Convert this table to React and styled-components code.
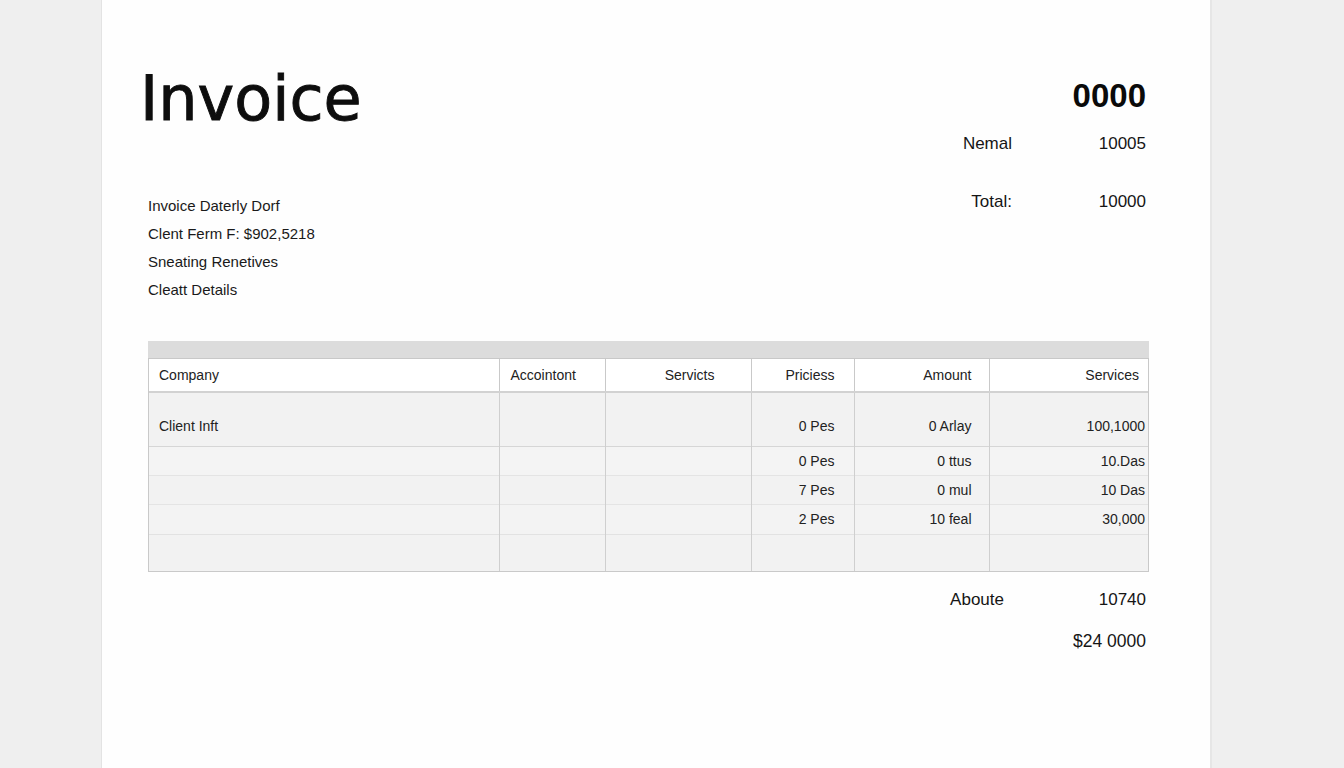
import React from 'react';
import styled, { createGlobalStyle } from 'styled-components';

const GlobalStyle = createGlobalStyle`
  html, body {
    margin: 0;
    padding: 0;
    background: #efefef;
  }
  body {
    font-family: "Liberation Sans", Arial, sans-serif;
    color: #141414;
  }
`;

const Backdrop = styled.div`
  min-height: 100vh;
  padding-left: 101px;
  box-sizing: border-box;
`;

const Sheet = styled.div`
  width: 1111px;
  min-height: 768px;
  box-sizing: border-box;
  background: #fefefe;
  border-left: 1px solid #e3e3e3;
  border-right: 2px solid #e6e6e6;
  padding: 63px 62px 40px 46px;
`;

const Header = styled.header`
  display: flex;
  justify-content: space-between;
  align-items: flex-start;
`;

const LeftCol = styled.div`
  display: flex;
  flex-direction: column;
`;

const Title = styled.h1`
  margin: 4px 0 0 -8px;
  font-family: "DejaVu Sans", Inter, sans-serif;
  font-weight: 400;
  font-size: 62px;
  line-height: 63px;
  letter-spacing: 0;
  color: #0d0d0d;
  -webkit-text-stroke: 0.9px #0d0d0d;
`;

const Details = styled.div`
  margin-top: 62px;
  display: flex;
  flex-direction: column;
`;

const DetailLine = styled.div`
  font-size: 15px;
  line-height: 28px;
  color: #1a1a1a;
`;

const RightCol = styled.div`
  display: flex;
  flex-direction: column;
  align-items: flex-end;
  padding-right: 2px;
`;

const InvoiceNumber = styled.div`
  margin-top: 16px;
  font-size: 33px;
  line-height: 34px;
  font-weight: 700;
  color: #0a0a0a;
`;

const Summary = styled.div`
  display: grid;
  grid-template-columns: auto 134px;
  row-gap: ${p => p.gap || 0}px;
  margin-top: ${p => p.top || 0}px;
`;

const SumLabel = styled.div`
  text-align: right;
  margin-right: ${p => p.shift || 0}px;
  font-size: ${p => p.size || 17}px;
  line-height: 24px;
  color: #151515;
`;

const SumValue = styled.div`
  text-align: right;
  font-size: ${p => p.size || 17}px;
  line-height: 24px;
  color: #151515;
`;

const TableWrap = styled.div`
  margin-top: 37px;
  margin-right: -3px;
  width: 1001px;
  border: 1px solid #c9c9c9;
  border-top: none;
  box-sizing: border-box;
`;

const TopBar = styled.div`
  height: 17px;
  background: #dcdcdc;
  border-bottom: 1px solid #c8c8c8;
  margin: 0 -1px;
`;

const Table = styled.table`
  width: 100%;
  border-collapse: collapse;
  table-layout: fixed;
  font-size: 14px;
  color: #222;
`;

const HeadCell = styled.th`
  height: 32px;
  padding: 0 ${p => p.pad || 10}px;
  font-weight: 400;
  text-align: ${p => p.align || 'right'};
  background: #ffffff;
  border-left: 1px solid #c9c9c9;
  border-bottom: 2px solid #d2d2d2;
  &:first-child { border-left: none; }
`;

const Row = styled.tr`
  background: ${p => p.shade || '#f3f3f3'};
  border-top: 1px solid ${p => p.line || '#e3e3e3'};
  &:first-child { border-top: none; }
`;

const Cell = styled.td`
  box-sizing: border-box;
  height: ${p => p.h}px;
  padding: ${p => p.offset || 0}px ${p => p.pad || 10}px 0;
  text-align: ${p => p.align || 'right'};
  border-left: 1px solid #cfcfcf;
  vertical-align: middle;
  &:first-child { border-left: none; }
`;

const Footer = styled.div`
  display: flex;
  justify-content: flex-end;
  padding-right: 2px;
`;

const columns = [
  { label: 'Company', width: 350, align: 'left', pad: 10 },
  { label: 'Accointont', width: 106, align: 'left', pad: 11 },
  { label: 'Servicts', width: 146, align: 'right', pad: 36 },
  { label: 'Priciess', width: 103, align: 'right', pad: 19 },
  { label: 'Amount', width: 135, align: 'right', pad: 17 },
  { label: 'Services', width: 159, align: 'right', pad: 9 },
];

const rows = [
  { h: 54, offset: 13, shade: '#f2f2f2', line: '#d4d4d4', cells: ['Client Inft', '', '', '0 Pes', '0 Arlay', '100,1000'] },
  { h: 29, shade: '#f4f4f4', line: '#d6d6d6', cells: ['', '', '', '0 Pes', '0 ttus', '10.Das'] },
  { h: 29, shade: '#f2f2f2', line: '#e4e4e4', cells: ['', '', '', '7 Pes', '0 mul', '10 Das'] },
  { h: 30, shade: '#f3f3f3', line: '#e4e4e4', cells: ['', '', '', '2 Pes', '10 feal', '30,000'] },
  { h: 37, shade: '#f2f2f2', line: '#e2e2e2', cells: ['', '', '', '', '', ''] },
];

export default function App() {
  return (
    <>
      <GlobalStyle />
      <Backdrop>
        <Sheet>
          <Header>
            <LeftCol>
              <Title>Invoice</Title>
              <Details>
                <DetailLine>Invoice Daterly Dorf</DetailLine>
                <DetailLine>Clent Ferm F: $902,5218</DetailLine>
                <DetailLine>Sneating Renetives</DetailLine>
                <DetailLine>Cleatt Details</DetailLine>
              </Details>
            </LeftCol>
            <RightCol>
              <InvoiceNumber>0000</InvoiceNumber>
              <Summary top={19} gap={34}>
                <SumLabel>Nemal</SumLabel>
                <SumValue>10005</SumValue>
                <SumLabel>Total:</SumLabel>
                <SumValue>10000</SumValue>
              </Summary>
            </RightCol>
          </Header>

          <TableWrap>
            <TopBar />
            <Table>
              <colgroup>
                {columns.map(c => <col key={c.label + c.width} style={{ width: c.width }} />)}
              </colgroup>
              <thead>
                <tr>
                  {columns.map(c => (
                    <HeadCell key={c.label + c.width} align={c.align} pad={c.pad}>{c.label}</HeadCell>
                  ))}
                </tr>
              </thead>
              <tbody>
                {rows.map((r, i) => (
                  <Row key={i} shade={r.shade} line={r.line}>
                    {r.cells.map((v, j) => (
                      <Cell key={j} h={r.h} offset={r.offset} align={j === 0 ? 'left' : columns[j].align} pad={j === 0 ? 10 : (j === 5 ? 3 : columns[j].pad)}>
                        {v}
                      </Cell>
                    ))}
                  </Row>
                ))}
              </tbody>
            </Table>
          </TableWrap>

          <Footer>
            <Summary top={16} gap={17}>
              <SumLabel size={17} shift={8}>Aboute</SumLabel>
              <SumValue size={17}>10740</SumValue>
              <SumLabel size={17}></SumLabel>
              <SumValue size={17.5}>$24 0000</SumValue>
            </Summary>
          </Footer>
        </Sheet>
      </Backdrop>
    </>
  );
}
